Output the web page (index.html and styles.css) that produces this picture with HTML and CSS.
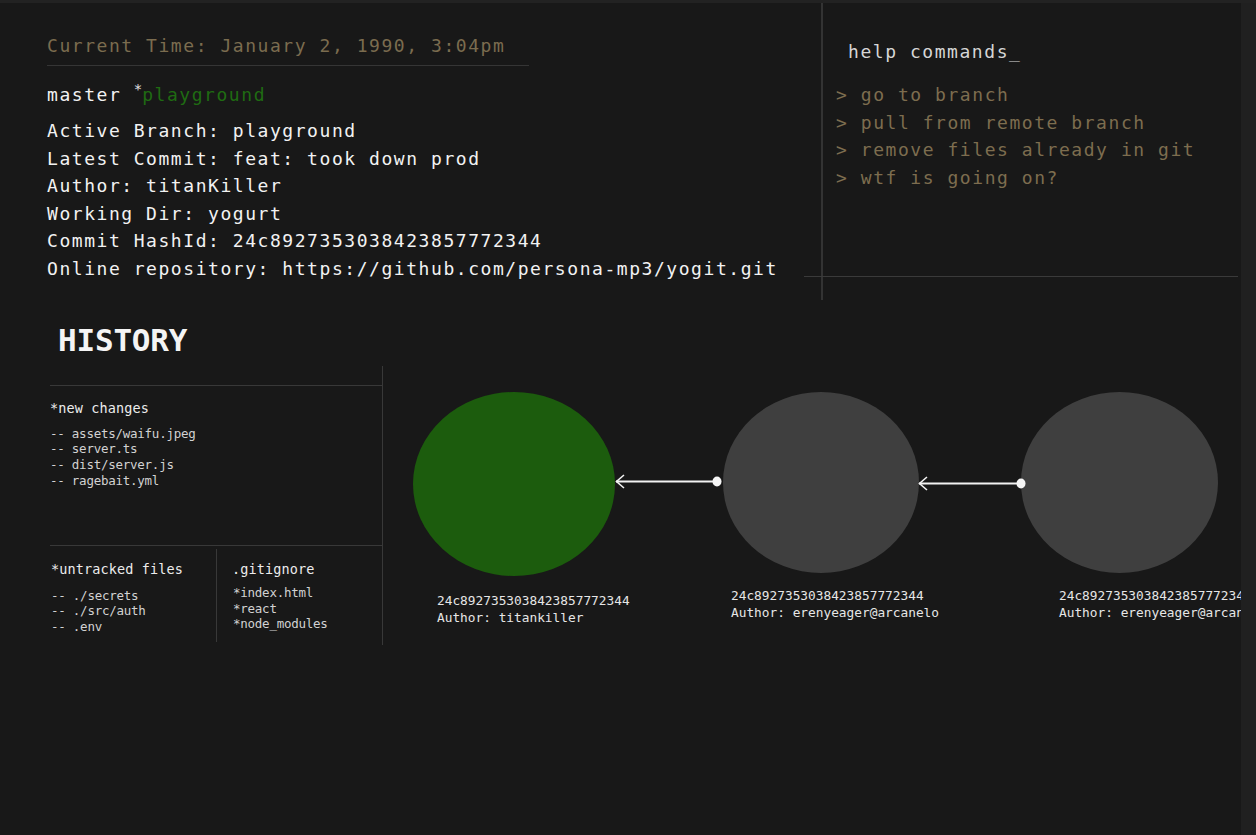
FILE: index.html
```html
<!DOCTYPE html>
<html lang="en">
<head>
<meta charset="utf-8">
<title>yogit</title>
<link rel="stylesheet" href="styles.css">
</head>
<body>
<div class="app">
  <main class="main">
    <section class="top">
      <div class="status">
        <div class="time">Current Time: January 2, 1990, 3:04pm</div>
        <div class="branches">master <sup class="star">*</sup><span class="current">playground</span></div>
        <ul class="info">
          <li>Active Branch: playground</li>
          <li>Latest Commit: feat: took down prod</li>
          <li>Author: titanKiller</li>
          <li>Working Dir: yogurt</li>
          <li>Commit HashId: 24c8927353038423857772344</li>
          <li>Online repository: https://github.com/persona-mp3/yogit.git</li>
        </ul>
      </div>
      <div class="help">
        <div class="help-title">help commands_</div>
        <ul class="help-list">
          <li>&gt; go to branch</li>
          <li>&gt; pull from remote branch</li>
          <li>&gt; remove files already in git</li>
          <li>&gt; wtf is going on?</li>
        </ul>
        <div class="help-rule"></div>
      </div>
    </section>

    <section class="history">
      <h1 class="history-title">HISTORY</h1>
      <div class="history-body">
        <div class="files">
          <div class="changes">
            <div class="files-head">*new changes</div>
            <ul class="file-list">
              <li>-- assets/waifu.jpeg</li>
              <li>-- server.ts</li>
              <li>-- dist/server.js</li>
              <li>-- ragebait.yml</li>
            </ul>
          </div>
          <div class="split">
            <div class="untracked">
              <div class="files-head">*untracked files</div>
              <ul class="file-list">
                <li>-- ./secrets</li>
                <li>-- ./src/auth</li>
                <li>-- .env</li>
              </ul>
            </div>
            <div class="ignore">
              <div class="files-head">.gitignore</div>
              <ul class="file-list file-list--tight">
                <li>*index.html</li>
                <li>*react</li>
                <li>*node_modules</li>
              </ul>
            </div>
          </div>
        </div>

        <div class="graph">
          <div class="commit commit--head">
            <div class="node node--head"></div>
            <div class="commit-label">
              <div>24c8927353038423857772344</div>
              <div>Author: titankiller</div>
            </div>
          </div>
          <svg class="link" width="108" height="184" viewBox="0 0 108 184">
            <line x1="1" y1="89.5" x2="102" y2="89.5" stroke="#f2f2f2" stroke-width="2"/>
            <polyline points="9,83 1.5,89.5 9,96" fill="none" stroke="#f2f2f2" stroke-width="1.6"/>
            <ellipse cx="102" cy="89.5" rx="4.5" ry="5" fill="#f5f5f5"/>
          </svg>
          <div class="commit commit--mid">
            <div class="node"></div>
            <div class="commit-label">
              <div>24c8927353038423857772344</div>
              <div>Author: erenyeager@arcanelo</div>
            </div>
          </div>
          <svg class="link" width="102" height="184" viewBox="0 0 102 184">
            <line x1="0" y1="91.5" x2="102" y2="91.5" stroke="#f2f2f2" stroke-width="2"/>
            <polyline points="8,85 0.5,91.5 8,98" fill="none" stroke="#f2f2f2" stroke-width="1.6"/>
            <ellipse cx="102" cy="91.5" rx="4.5" ry="5" fill="#f5f5f5"/>
          </svg>
          <div class="commit commit--tail">
            <div class="node"></div>
            <div class="commit-label">
              <div>24c8927353038423857772344</div>
              <div>Author: erenyeager@arcanelo</div>
            </div>
          </div>
        </div>
      </div>
    </section>
  </main>
  <div class="scroll-track"></div>
</div>
</body>
</html>
```

FILE: styles.css
```css
* { box-sizing: border-box; }

html, body {
  margin: 0;
  padding: 0;
  background: #181818;
}

body {
  width: 1256px;
  height: 835px;
  overflow: hidden;
  border-top: 3px solid #222222;
  font-family: "DejaVu Sans Mono", "Liberation Mono", monospace;
  color: #eeeeee;
}

ul { list-style: none; margin: 0; padding: 0; }

.app {
  display: flex;
  height: 832px;
}

.main {
  flex: 1;
  min-width: 0;
  overflow: hidden;
}

.scroll-track {
  width: 15px;
  background: #202020;
}

/* ---------- top ---------- */
.top {
  display: grid;
  grid-template-columns: 823px 1fr;
  height: 297px;
}

.status {
  border-right: 2px solid #333333;
  padding: 31px 0 0 47px;
  font-size: 18px;
  letter-spacing: 1.55px;
}

.time {
  width: 482px;
  line-height: 24px;
  padding-bottom: 7px;
  border-bottom: 1px solid #353535;
  color: #7b6c4f;
}

.branches {
  margin-top: 17px;
  line-height: 24px;
  color: #f2f2f2;
}

.star {
  font-size: 14px;
  vertical-align: 7px;
  line-height: 0;
  letter-spacing: 0;
  color: #e0e0e0;
}

.current {
  color: #1f6b12;
}

.info {
  margin-top: 10px;
  line-height: 27.6px;
  color: #f2f2f2;
}

.help {
  display: flex;
  flex-direction: column;
  padding: 37px 3px 0 13px;
  font-size: 18px;
  letter-spacing: 1.55px;
}

.help-title {
  padding-left: 12px;
  line-height: 24px;
  color: #d6d6d6;
}

.help-list {
  margin-top: 17px;
  line-height: 27.6px;
  color: #7d6d4f;
}

.help-rule {
  margin: auto 0 23px -32px;
  height: 1px;
  background: #3a3a3a;
}

/* ---------- history ---------- */
.history-title {
  margin: 22px 0 0 58px;
  font-size: 31px;
  line-height: 36px;
  font-weight: bold;
  letter-spacing: -0.2px;
  color: #f4f4f4;
}

.history-body {
  display: flex;
  align-items: flex-start;
  margin-top: 8px;
  padding-left: 50px;
}

.files {
  width: 333px;
  flex-shrink: 0;
  padding-top: 19px;
  border-right: 1px solid #383838;
}

.changes {
  height: 161px;
  border-top: 1px solid #383838;
  border-bottom: 1px solid #383838;
  padding-top: 14px;
}

.files-head {
  font-size: 13.5px;
  line-height: 17px;
  letter-spacing: 0.12px;
  color: #ececec;
}

.file-list {
  margin-top: 8.5px;
  font-size: 12.5px;
  line-height: 15.7px;
  letter-spacing: -0.25px;
  color: #d2d2d2;
}

.file-list--tight {
  margin-top: 7px;
}

.split {
  display: flex;
  padding-bottom: 3px;
}

.untracked {
  width: 167px;
  margin-top: 3px;
  padding: 12px 0 8px 1px;
  border-right: 1px solid #383838;
}

.untracked .file-list {
  margin-top: 9.5px;
  line-height: 15.5px;
}

.ignore {
  margin-top: 3px;
  padding: 12px 0 8px 15px;
}

.ignore .file-list {
  padding-left: 1px;
}

.graph {
  display: flex;
  align-items: flex-start;
  padding: 26px 0 0 30px;
}

.commit {
  flex-shrink: 0;
  width: 196px;
}

.commit--head { width: 202px; }
.commit--tail { width: 197px; }

.node {
  width: 100%;
  height: 181px;
  border-radius: 50%;
  background: #3f3f3f;
}

.node--head {
  height: 184px;
  background: #1c5c0d;
}

.commit-label {
  margin-top: 13.5px;
  font-size: 12.8px;
  line-height: 17px;
  white-space: nowrap;
  color: #e6e6e6;
}

.commit--head .commit-label {
  margin-top: 15.5px;
  padding-left: 24px;
}

.commit--mid .commit-label {
  padding-left: 8px;
}

.commit--tail .commit-label {
  padding-left: 38px;
}

.link {
  flex-shrink: 0;
  overflow: visible;
  position: relative;
  z-index: 1;
}
```
